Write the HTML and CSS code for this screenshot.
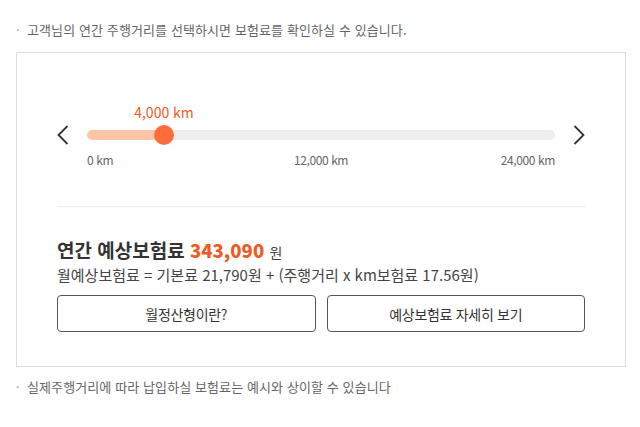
FILE: index.html
```html
<!DOCTYPE html>
<html lang="ko">
<head>
<meta charset="utf-8">
<link rel="stylesheet" href="styles.css">
</head>
<body>
<p class="note"><span class="dot">·</span>고객님의 연간 주행거리를 선택하시면 보험료를 확인하실 수 있습니다.</p>
<section class="box">
  <div class="slider">
    <button class="arrow" aria-label="이전">
      <svg width="12" height="20" viewBox="0 0 12 20"><path d="M10.5 1 L1.5 10 L10.5 19" fill="none" stroke="#333" stroke-width="1.8"/></svg>
    </button>
    <div class="range">
      <div class="track"><div class="fill" style="width:16.67%"></div></div>
      <span class="value" style="left:16.67%">4,000 km</span>
      <span class="thumb" style="left:16.67%"></span>
      <div class="ticks"><span class="t-start">0 km</span><span class="t-mid">12,000 km</span><span class="t-end">24,000 km</span></div>
    </div>
    <button class="arrow" aria-label="다음">
      <svg width="12" height="20" viewBox="0 0 12 20"><path d="M1.5 1 L10.5 10 L1.5 19" fill="none" stroke="#333" stroke-width="1.8"/></svg>
    </button>
  </div>
  <hr class="divider">
  <h2 class="total">연간 예상보험료 <strong>343,090</strong> <span class="won">원</span></h2>
  <p class="formula">월예상보험료 = 기본료 21,790원 + (주행거리 x km보험료 17.56원)</p>
  <div class="buttons">
    <button class="btn">월정산형이란?</button>
    <button class="btn">예상보험료 자세히 보기</button>
  </div>
</section>
<p class="note bottom"><span class="dot">·</span>실제주행거리에 따라 납입하실 보험료는 예시와 상이할 수 있습니다</p>
</body>
</html>
```

FILE: styles.css
```css
* { box-sizing: border-box; }
html, body { margin: 0; padding: 0; background: #fff; }
body {
  width: 640px;
  font-family: "Noto Sans CJK KR", "Noto Sans", sans-serif;
  color: #333;
}
.note {
  margin: 0;
  padding: 21px 0 0 16px;
  font-size: 13px;
  line-height: 18px;
  color: #666;
  letter-spacing: 0.1px;
}
.note .dot {
  display: inline-block;
  width: 11px;
  font-size: 12px;
  color: #999;
}
.note.bottom { padding-top: 11px; }
.box {
  margin: 13px 14px 0 16px;
  border: 1px solid #dcdcdc;
  padding: 77px 40px 34px 40px;
}
.slider {
  display: flex;
  align-items: flex-start;
}
.arrow {
  width: 30px;
  height: 20px;
  margin-top: -5px;
  padding: 0;
  border: 0;
  background: none;
  display: flex;
  align-items: center;
}
.arrow:last-child { justify-content: flex-end; }
.range {
  flex: 1;
  position: relative;
}
.track {
  height: 10px;
  border-radius: 5px;
  background: #eeeeee;
  overflow: hidden;
}
.fill {
  height: 100%;
  background: #ffc5a4;
  border-radius: 5px;
}
.thumb {
  position: absolute;
  top: -5px;
  width: 20px;
  height: 20px;
  margin-left: -11px;
  border-radius: 50%;
  background: #ff6e3a;
}
.value {
  position: absolute;
  top: -27px;
  transform: translateX(-50%);
  margin-left: -1px;
  white-space: nowrap;
  font-size: 14px;
  line-height: 18px;
  color: #f05a22;
}
.ticks {
  display: grid;
  grid-template-columns: 1fr auto 1fr;
  margin-top: 13px;
  font-size: 12px;
  line-height: 14px;
  color: #666;
  letter-spacing: -0.4px;
}
.t-start { justify-self: start; }
.t-end { justify-self: end; }
.divider {
  margin: 39px 0 0 0;
  border: 0;
  height: 1px;
  background: #ebebeb;
}
.total {
  margin: 30px 0 0 0;
  font-size: 19px;
  line-height: 26px;
  font-weight: 700;
  color: #333;
}
.total strong {
  font-size: 18.5px;
  color: #f05a22;
}
.total .won {
  font-size: 14px;
  font-weight: 400;
  color: #444;
}
.formula {
  margin: 0;
  font-size: 15px;
  line-height: 20px;
  color: #444;
}
.buttons {
  display: flex;
  gap: 11px;
  margin-top: 10px;
}
.btn {
  flex: 1;
  height: 37px;
  border: 1px solid #555;
  border-radius: 4px;
  background: #fff;
  font-family: inherit;
  font-size: 14px;
  color: #333;
  letter-spacing: -0.3px;
  padding: 0;
}
```
